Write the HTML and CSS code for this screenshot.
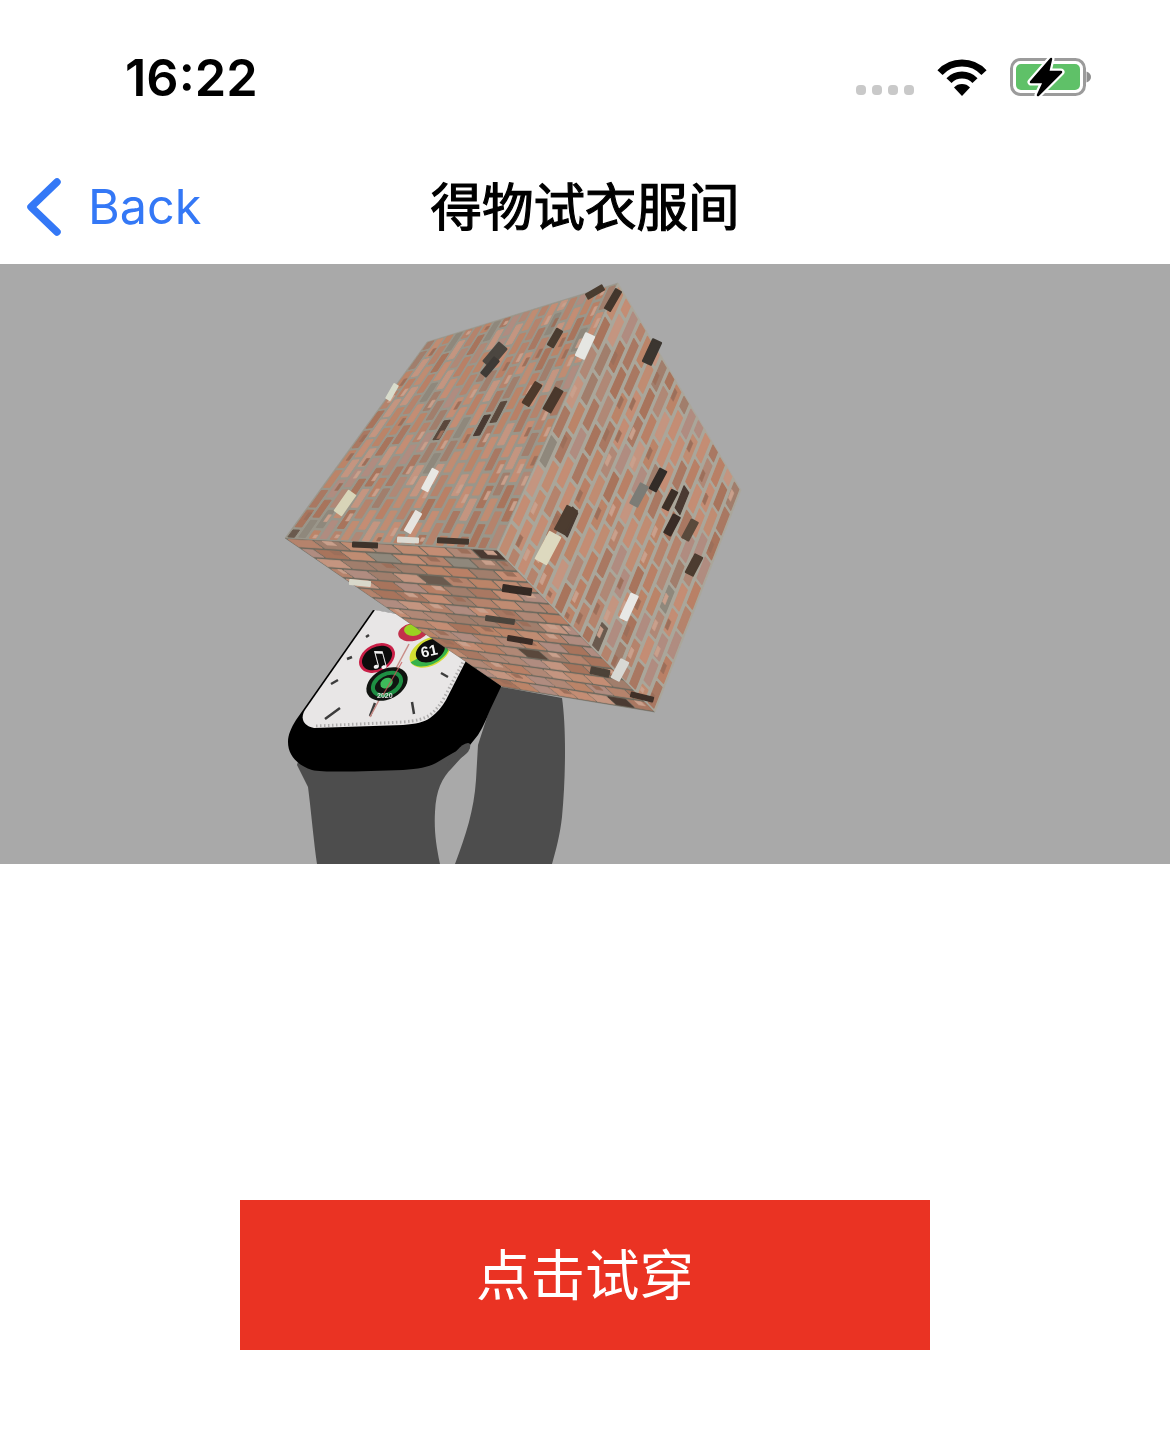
FILE: index.html
```html
<!DOCTYPE html>
<html lang="zh">
<head>
<meta charset="utf-8">
<title>得物试衣服间</title>
<link rel="stylesheet" href="styles.css">
</head>
<body>
<div class="page">
  <header class="status">
    <span class="time">16:22</span>
    <div class="status-icons">
      <div class="dots"><i></i><i></i><i></i><i></i></div>
      <svg class="wifi" viewBox="0 0 50 38">
        <path d="M3 14.6A30 30 0 0 1 47 14.6M12 22.6A18 18 0 0 1 38 22.6" fill="none" stroke="#000" stroke-width="7"/>
        <path d="M25 38L17 29.5A11 11 0 0 1 33 29.5Z" fill="#000"/>
      </svg>
      <svg class="battery" viewBox="0 0 81 42">
        <rect x="1.500" y="3.500" width="73" height="35" rx="9" fill="#fff" stroke="#9b9b9b" stroke-width="3"/>
        <rect x="6" y="8" width="64" height="26" rx="5" fill="#5fc168"/>
        <path d="M76.500 15.500C79.500 16.500 81 18.500 81 21C81 23.500 79.500 25.500 76.500 26.500Z" fill="#8e8e8e"/>
        <path d="M41 3L21 26H34L28 39L51 16H38Z" fill="#fff" stroke="#fff" stroke-width="7" stroke-linejoin="round"/>
        <path d="M41 3L21 26H34L28 39L51 16H38Z" fill="#000" stroke="#000" stroke-width="2.500" stroke-linejoin="round"/>
      </svg>
    </div>
  </header>
  <nav class="nav">
    <a class="back">
      <svg class="chevron" viewBox="0 0 36 58"><path d="M31 4L5 29L31 54" fill="none" stroke="#3478f6" stroke-width="7.500" stroke-linecap="round" stroke-linejoin="round"/></svg>
      <span>Back</span>
    </a>
    <h1 class="title">得物试衣服间</h1>
    <span></span>
  </nav>
  <main class="scene">
    <svg class="scene-art" viewBox="0 264 1170 600">
      <!-- back strap -->
      <path class="strap" d="M497 686L562 698C566 725 566 775 562 817C560 835 556 850 552 864L455 864C466 835 474 810 476 780L478 745Z"/>
      <!-- front strap -->
      <path class="strap" d="M297 765L308 787C311 810 314 845 317 864L440 864C436 845 434 830 435 812C436 790 442 778 452 768L470 748L440 740L300 755Z"/>
      <!-- watch case -->
      <path d="M373 610L296 720C291 728 288 735 288 742C288 755 297 765 312 770C325 773 370 771 403 770C418 769 428 767 436 763C450 755 462 747 470 745L478 735C483 727 486 720 490 710L508 672C510 664 508 660 503 657L477 645L430 620Z" fill="#000"/>
      <path class="strap" d="M447 766C452 756 460 744 468 743C472 743 470 750 467 753C462 758 455 762 447 766Z"/>
      <!-- watch face -->
      <g class="dial">
        <path d="M375 610L305 710C300 718 303 726 314 728L403 725C416 724 424 722 430 718C437 713 442 707 446 700L474 645L430 620Z" fill="#e8e6e6"/>
        <path class="fine" d="M316 726L403 722C416 721 424 719 430 715C436 710 440 705 444 698L471 647"/>
        <g class="marks">
          <path d="M369 635L366 637M347 659L352 657M331 684L338 680M325 719L340 708M412 702L414 714M370 716L375 703M441 673L448 677M455 651L462 649"/>
        </g>
        <path d="M409 644L370 717" stroke="#c98d88" stroke-width="1.500" fill="none"/>
        <g transform="rotate(-28 377 658)">
          <ellipse cx="377" cy="658" rx="19" ry="13.500" fill="#c91f47"/>
          <ellipse cx="377" cy="658" rx="16" ry="11" fill="#0c0c0c"/>
        </g>
        <text class="note" transform="rotate(-15 377 658)" x="367" y="668">♫</text>
        <ellipse cx="413" cy="632" rx="15" ry="9" fill="#c3304b" transform="rotate(-12 413 632)"/>
        <ellipse cx="413" cy="630" rx="9" ry="6" fill="#9ad321"/>
        <g transform="rotate(-28 430 652)">
          <ellipse cx="430" cy="652" rx="22" ry="13.500" fill="#d3dc32"/>
          <path d="M408 652A22 13.500 0 0 0 450 656L430 652Z" fill="#35b24a"/>
          <ellipse cx="431" cy="651" rx="15.500" ry="10.500" fill="#0c0c0c"/>
        </g>
        <text class="dial-num" transform="rotate(-12 430 652)" x="421" y="656">61</text>
        <g transform="rotate(-28 387 684)">
          <ellipse cx="387" cy="684" rx="22" ry="15" fill="#101410"/>
          <ellipse cx="387" cy="684" rx="15" ry="10" fill="none" stroke="#1e8f43" stroke-width="4"/>
          <ellipse cx="387" cy="683" rx="6.500" ry="5" fill="#3dbb5a"/>
        </g>
        <text class="dial-small" x="377" y="698">2020</text>
        <path d="M402 662L383 695" stroke="#c9585a" stroke-width="1.200" fill="none" opacity=".8"/>
      </g>
      <g id="cube"></g>
    </svg>
  </main>
  <div class="action">
    <button class="try">点击试穿</button>
  </div>
</div>
<script src="cube.js"></script>
</body>
</html>
```
FILE: styles.css
```css
* { box-sizing: border-box; }
html, body { margin: 0; background: #fff; }
.page { width: 1170px; height: 1447px; display: flex; flex-direction: column; overflow: hidden; font-family: "Inter", "Liberation Sans", sans-serif; }
.status { height: 150px; display: flex; justify-content: space-between; align-items: flex-start; padding: 48px 79px 0 125px; }
.time { font-size: 50.500px; line-height: 60px; font-weight: 600; color: #000; }
.status-icons { display: flex; align-items: flex-start; }
.dots { display: flex; gap: 6px; margin-top: 37px; margin-right: 23px; }
.dots i { width: 10px; height: 10px; border-radius: 4px; background: #c9c9c9; }
.wifi { width: 50px; height: 38px; margin-top: 10px; margin-right: 23px; display: block; }
.battery { width: 81px; height: 42px; margin-top: 8px; display: block; }
.nav { height: 114px; display: grid; grid-template-columns: 1fr auto 1fr; align-items: center; }
.back { display: flex; align-items: center; gap: 26px; padding-left: 26px; color: #3478f6; font-size: 48.500px; line-height: 60px; }
.chevron { width: 36px; height: 58px; display: block; }
.title { margin: 0 0 6px; font-family: "Noto Sans CJK SC", sans-serif; font-size: 51.500px; line-height: 70px; font-weight: 400; -webkit-text-stroke: 1.2px #000; color: #000; }
.scene { height: 600px; background: #a9a9a9; flex: none; }
.scene-art { width: 1170px; height: 600px; display: block; }
.strap { fill: #4d4d4d; }
.dial { filter: blur(0.6px); }
.fine { stroke: #aeacac; stroke-width: 3; stroke-dasharray: 1.500 2.500; fill: none; }
.marks path { stroke: #3c3c3c; stroke-width: 2.500; fill: none; }
.note { font-family: "DejaVu Sans", sans-serif; font-size: 24px; fill: #f2f2f2; }
.dial-num { font-family: "Liberation Sans", sans-serif; font-size: 15px; font-weight: 700; fill: #f2f2f2; }
.dial-small { font-family: "Liberation Sans", sans-serif; font-size: 7px; font-weight: 700; fill: #ddd; }
.cube-face { filter: blur(0.5px); }
.action { flex: 1; display: flex; justify-content: center; padding-top: 336px; }
.try { width: 690px; height: 150px; border: 0; border-radius: 0; background: #ea3323; color: #fff; font-family: "Noto Sans CJK SC", sans-serif; font-size: 54.500px; font-weight: 400; padding: 0 0 8px; }
```
FILE: cube.js
```js
// Procedural brick texture for the 3D cube: each brick is bilinearly mapped on its face.
(function () {
  var NS = 'http://www.w3.org/2000/svg';
  var root = document.getElementById('cube');
  var seed = 77;
  function rnd() { seed = (seed * 16807) % 2147483647; return (seed - 1) / 2147483646; }
  var base = ['#b5836c', '#c08c72', '#a97862', '#b98066', '#c49580', '#a8745c', '#b08876', '#a17e6c', '#bb8468', '#b08c80', '#c48d74'];
  function color() {
    var r = rnd();
    if (r < 0.02) return ['#4a3a32', '#5a483c', '#6a5a4e'][Math.floor(rnd() * 3)];
    if (r < 0.035) return '#8f887c';
    return base[Math.floor(rnd() * base.length)];
  }
  function mapper(q) {
    return function (u, v) {
      var a = (1 - u) * (1 - v), b = u * (1 - v), c = u * v, d = (1 - u) * v;
      return [a * q[0][0] + b * q[1][0] + c * q[2][0] + d * q[3][0],
              a * q[0][1] + b * q[1][1] + c * q[2][1] + d * q[3][1]];
    };
  }
  function poly(parent, pts, fill, sw) {
    var p = document.createElementNS(NS, 'polygon');
    p.setAttribute('points', pts.map(function (a) { return a[0].toFixed(1) + ',' + a[1].toFixed(1); }).join(' '));
    p.setAttribute('fill', fill);
    p.setAttribute('stroke', fill);
    p.setAttribute('stroke-width', sw);
    p.setAttribute('stroke-linejoin', 'round');
    parent.appendChild(p);
  }
  function face(q, cols, rows, mortar, sw, gv, gu) {
    var g = document.createElementNS(NS, 'g');
    g.setAttribute('class', 'cube-face');
    root.appendChild(g);
    poly(g, q, mortar, 0.5);
    var m = mapper(q);
    for (var r = 0; r < rows; r++) {
      var off = r % 2 ? 0.5 : 0;
      for (var c = -1; c <= cols; c++) {
        var u0 = Math.max(0.006, (c + off + gu) / cols), u1 = Math.min(0.994, (c + off + 1 - gu) / cols);
        if (u1 <= u0) continue;
        var v0 = (r + gv) / rows, v1 = (r + 1 - gv) / rows;
        poly(g, [m(u0, v0), m(u1, v0), m(u1, v1), m(u0, v1)], color(), sw);
        if (rnd() < 0.3) {
          var um = u0 + (u1 - u0) * rnd() * 0.5, ue = um + (u1 - u0) * 0.4, vm = (v0 + v1) / 2;
          poly(g, [m(um, v0), m(ue, v0), m(ue, vm), m(um, vm)], rnd() < 0.6 ? '#c9a08c' : '#9c6f5a', 0.6);
        }
      }
    }
    return g;
  }
  var C = [497, 550], T = [618, 283], L = [285, 538], B = [655, 712];
  face([C, L, [503, 687], B], 8, 15, '#6f6a5e', 0.8, 0.13, 0.05);
  face([C, T, [427, 342], L], 10, 20, '#9a968a', 1, 0.19, 0.08);
  var right = face([C, T, [741, 490], B], 9, 17, '#aaa69a', 1.2, 0.2, 0.08);

  // Distinctive bricks placed where they sit on the wall
  function spot(x, y, fill, len, wid, ang) {
    var a = ang * Math.PI / 180, ux = Math.cos(a) * len / 2, uy = Math.sin(a) * len / 2, vx = -Math.sin(a) * wid / 2, vy = Math.cos(a) * wid / 2;
    poly(right, [[x - ux - vx, y - uy - vy], [x + ux - vx, y + uy - vy], [x + ux + vx, y + uy + vy], [x - ux + vx, y - uy + vy]], fill, 2);
  }
  [[585, 346, '#e6e6e2', 24, 9, -65], [430, 480, '#e8e8e4', 22, 6, -62], [548, 548, '#ddd9bf', 30, 12, -62],
   [629, 607, '#e8e8e6', 26, 7, -65], [392, 392, '#d8dccc', 16, 4, -60], [345, 503, '#d8d4b8', 24, 8, -55],
   [413, 522, '#e6e4e0', 22, 6, -60], [408, 540, '#dcdad2', 20, 4, 3], [652, 352, '#3c3630', 24, 9, -65],
   [553, 400, '#4a382c', 24, 8, -60], [532, 394, '#4e3a2c', 24, 7, -58], [566, 520, '#4c3c30', 26, 11, -62],
   [613, 300, '#43362c', 22, 6, -60], [658, 480, '#332c28', 22, 7, -62], [670, 500, '#3c3028', 20, 6, -62],
   [672, 525, '#3a2c26', 20, 7, -62], [495, 355, '#4b4640', 24, 10, -50], [490, 367, '#3e3a36', 20, 6, -50],
   [517, 590, '#352a24', 28, 6, 8], [500, 620, '#4a443c', 28, 4, 8], [600, 672, '#4c4238', 18, 6, 12],
   [642, 697, '#403028', 22, 4, 14], [639, 495, '#7c7c76', 22, 8, -62], [365, 545, '#3e332b', 24, 4, 3],
   [453, 541, '#43372e', 30, 4, 3], [360, 583, '#d8d8ca', 20, 4, 5], [620, 670, '#d8d8d4', 20, 8, -62],
   [595, 292, '#4a3c30', 18, 5, -30], [555, 338, '#4a3c30', 18, 6, -60], [690, 530, '#5a4a3c', 20, 7, -62],
   [694, 565, '#4c3c30', 20, 8, -62], [520, 640, '#3a2c26', 24, 4, 10]]
    .forEach(function (s) { spot(s[0], s[1], s[2], s[3], s[4], s[5]); });
})();
```
